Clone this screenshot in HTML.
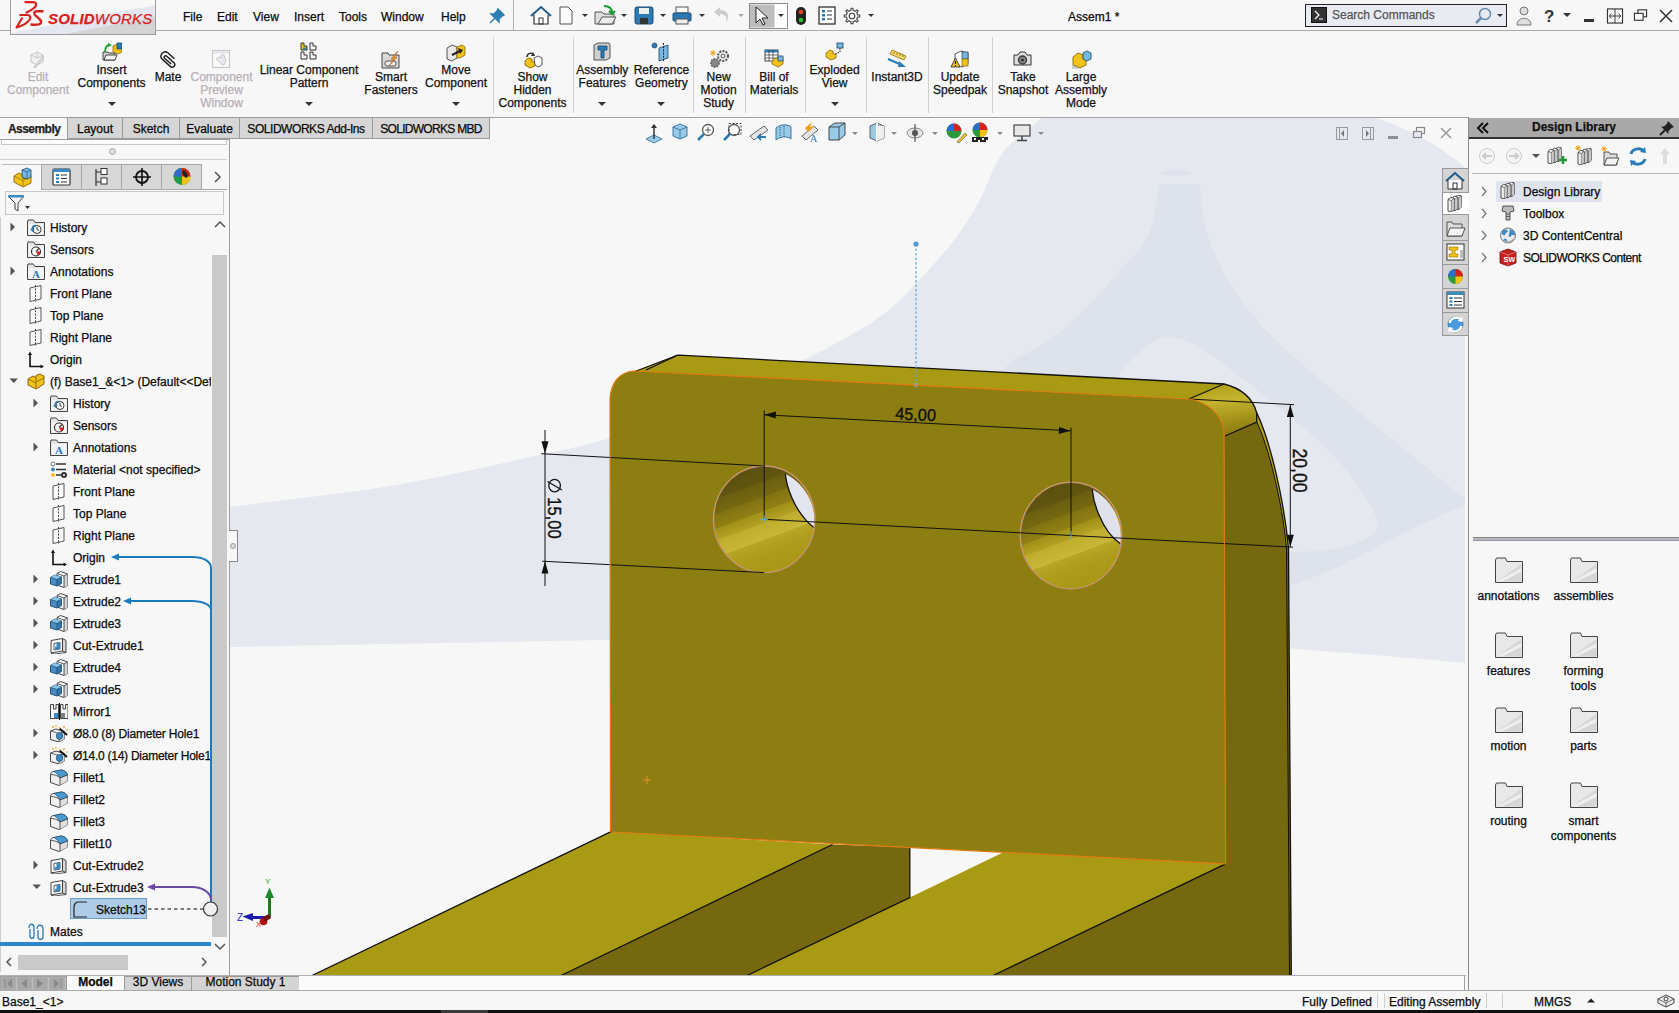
<!DOCTYPE html>
<html><head><meta charset="utf-8">
<style>
*{margin:0;padding:0;box-sizing:border-box}
html,body{width:1679px;height:1013px;overflow:hidden;background:#f7f7f7;font-family:"Liberation Sans",sans-serif;font-size:12px;color:#0a0a0a}
.a{position:absolute}
.t{position:absolute;white-space:nowrap;line-height:13px;-webkit-text-stroke:0.25px currentColor}
</style></head><body>

<!-- ============ GRAPHICS AREA ============ -->
<svg class="a" style="left:0;top:0" width="1679" height="1013" viewBox="0 0 1679 1013">
<defs>
<clipPath id="vp"><rect x="230" y="118" width="1235" height="858"/></clipPath>
<linearGradient id="holeg" x1="0.1" y1="0" x2="0.45" y2="1">
<stop offset="0" stop-color="#574c0e"/><stop offset="0.25" stop-color="#615510"/><stop offset="0.25" stop-color="#6a5d10"/><stop offset="0.38" stop-color="#776911"/><stop offset="0.38" stop-color="#827312"/><stop offset="0.5" stop-color="#908014"/><stop offset="0.5" stop-color="#a09018"/><stop offset="0.6" stop-color="#b3a224"/><stop offset="0.6" stop-color="#bfad2e"/><stop offset="0.74" stop-color="#c9b738"/><stop offset="0.74" stop-color="#b8a726"/><stop offset="0.85" stop-color="#ad9d1a"/><stop offset="1" stop-color="#a89816"/>
</linearGradient>
<linearGradient id="filg" x1="0" y1="0" x2="0.2" y2="1">
<stop offset="0" stop-color="#a99a14"/><stop offset="0.4" stop-color="#c6b42e"/><stop offset="1" stop-color="#8e7f10"/>
</linearGradient>
</defs>
<rect x="229" y="117" width="1237" height="859" fill="#f7f7f7"/>
<g clip-path="url(#vp)">
<!-- background tent shape -->
<path d="M229 507 C 256.8 503.3 344.3 493.7 396.0 485.0 C 447.7 476.3 503.3 462.8 539.0 455.0 C 574.7 447.2 583.2 446.3 610.0 438.0 C 636.8 429.7 667.7 418.0 700.0 405.0 C 732.3 392.0 774.0 374.2 803.6 359.8 C 833.2 345.4 857.9 332.1 877.6 318.3 C 897.3 304.5 908.7 290.7 922.0 276.9 C 935.3 263.1 947.7 248.7 957.6 235.4 C 967.5 222.1 975.4 207.8 981.3 197.0 C 987.2 186.2 988.5 178.7 993.0 170.3 C 997.5 161.9 999.7 155.5 1008.0 146.6 C 1016.3 137.7 1037.2 121.9 1043.0 117.0 L 1372 117 C 1410 128 1445 150 1466 168 L 1466 663 C 1436.7 660.6 1351.0 652.8 1290.0 648.6 C 1229.0 644.4 1165.0 639.9 1100.0 638.0 C 1035.0 636.1 981.7 636.7 900.0 637.0 C 818.3 637.3 721.8 638.3 610.0 640.0 C 498.2 641.7 292.5 645.8 229.0 647.0 Z" fill="#e5e8ef"/>
<path d="M960 420 L1009 363.5 C 1017.8 357.9 1044.2 344.6 1062.0 330.0 C 1079.8 315.4 1101.0 292.2 1115.5 276.0 C 1130.0 259.8 1141.8 248.2 1149.0 233.0 C 1156.2 217.8 1157.3 192.6 1159.0 184.5 L1200 184.5 C 1201.2 192.6 1201.7 216.1 1207.0 233.0 C 1212.3 249.9 1221.1 269.1 1231.6 286.0 C 1242.1 302.9 1255.5 319.2 1270.0 334.5 C 1284.5 349.8 1300.9 362.7 1318.7 378.0 C 1336.5 393.3 1352.2 406.1 1376.7 426.4 C 1401.2 446.7 1451.1 487.7 1466.0 500.0 L1466 504 C 1455.0 509.2 1421.0 524.7 1400.0 535.0 C 1379.0 545.3 1358.4 557.5 1340.0 566.0 C 1321.6 574.5 1298.0 582.7 1289.6 586.0 L1000 590 Z" fill="#dee2eb"/>
<path d="M1110 385 C 1115.0 379.5 1129.4 360.0 1140.0 352.0 C 1150.6 344.0 1159.8 335.1 1173.5 337.0 C 1187.2 338.9 1197.8 346.2 1222.0 363.5 C 1246.2 380.8 1295.7 419.9 1318.7 441.0 C 1341.7 462.1 1350.3 475.5 1360.0 490.0 C 1369.7 504.5 1380.0 518.3 1376.7 528.0 C 1373.4 537.7 1354.5 544.0 1340.0 548.0 C 1325.5 552.0 1298.0 551.3 1289.6 552.0 L1100 560 Z" fill="#e5e8ef"/>
<ellipse cx="1176" cy="173" rx="16" ry="2.5" fill="#dee2eb"/>
<!-- dark side faces -->
<path d="M1224 384 C 1240 388 1252 396 1256.7 412.7 C 1270 440 1284 500 1288.5 548 L 1291.5 976 L 992 976 L 1225.6 863.8 L 1224 431 Z" fill="#76680e"/>
<!-- light outer fillet strip -->
<path d="M1256.7 412.7 C 1270 440 1284 500 1288.5 548 L 1286.5 548 C 1282 500 1268 445 1256.7 422 Z" fill="#b0a01c"/>
<!-- top face -->
<path d="M634 371.5 L 674 356.5 C 675.5 355.6 677 355.2 679 355.2 L 1224 384 L 1189 399 Z" fill="#a99a14"/>
<!-- top-right fillet -->
<path d="M1189 399 L 1224 384 C 1240 388 1252 396 1256.7 412.7 L 1256.7 422 L 1225 436 C 1222 415 1208 402 1189 399 Z" fill="url(#filg)"/>
<!-- front face -->
<path d="M610.5 832 L 610 399 C 611 382 620 372 634 371 L 1189 399 C 1208 402 1222 415 1224 431 L 1225.6 863.8 Z" fill="#8c7e10"/>
<!-- legs -->
<path d="M611.6 831.4 L 832.5 844.5 L 560 976 L 311 976 Z" fill="#a99a14"/>
<path d="M832.5 844.5 L 909.8 847.3 L 909.8 897.5 L 746 976 L 560 976 Z" fill="#76680e"/>
<path d="M909.8 897.5 L 1004 852 L 1225.6 863.8 L 992 976 L 746 976 Z" fill="#a99a14"/>
<!-- holes -->
<ellipse cx="764.2" cy="519.3" rx="50.7" ry="53.3" fill="url(#holeg)"/>
<path d="M785.4 473.7 A50.7 53.3 0 0 1 814.2 527.7 C 806 522 797 510 792 498 C 788 489 786 482 785.4 473.7 Z" fill="#e2e5ee" stroke="none"/>
<path d="M785.4 473.7 C 786 482 788 489 792 498 C 797 510 806 522 814.2 527.7" fill="none" stroke="#111" stroke-width="1.3"/>
<ellipse cx="1071" cy="535.5" rx="50.7" ry="53.2" fill="url(#holeg)"/>
<path d="M1092.2 489.3 A50.7 53.2 0 0 1 1120.4 543.8 C 1112 538 1104 527 1099 515 C 1095 506 1093 498 1092.2 489.3 Z" fill="#dfe2eb" stroke="none"/>
<path d="M1092.2 489.3 C 1093 498 1095 506 1099 515 C 1104 527 1112 538 1120.4 543.8" fill="none" stroke="#111" stroke-width="1.3"/>
<ellipse cx="764.2" cy="519.3" rx="50.7" ry="53.3" fill="none" stroke="#d9905a" stroke-width="1.4"/>
<ellipse cx="764.2" cy="519.3" rx="50.7" ry="53.3" fill="none" stroke="#6aaee0" stroke-width="0.7" stroke-dasharray="3 5"/>
<ellipse cx="1071" cy="535.5" rx="50.7" ry="53.2" fill="none" stroke="#d9905a" stroke-width="1.4"/>
<ellipse cx="1071" cy="535.5" rx="50.7" ry="53.2" fill="none" stroke="#6aaee0" stroke-width="0.7" stroke-dasharray="3 5"/>

<!-- edges -->
<g fill="none" stroke="#111" stroke-width="1.3">
<path d="M635 371.5 L 674 356.5 C 675.5 355.6 677 355.2 679 355.2 L 1224 384 C 1240 388 1252 396 1256.7 412.7 C 1270 440 1284 500 1288.5 548 L 1291.3 976"/>
<path d="M1256.7 422 C 1268 445 1282 500 1286.5 548 L 1289.5 976" stroke-width="1"/>
<path d="M646 370 L 676 356"/>
<path d="M1189 399 L 1224 384"/>
<path d="M1225 436 L 1256.7 422 L 1256.7 412.7"/>
<path d="M611.6 831.4 L 311 976"/>
<path d="M832.5 844.5 L 560 976"/>
<path d="M909.8 847.3 L 909.8 897.5 L 746 976"/>
<path d="M1225.6 863.8 L 992 976"/>
</g>

<!-- annotations -->
<g stroke="#111" stroke-width="1" fill="none">
<path d="M764.2 410.5 V519.3"/>
<path d="M1071 427.5 V535.5"/>
<path d="M764.2 414.8 L1071 430.8"/>
<path d="M545 430 V586"/>
<path d="M541.3 453.7 L764.2 466"/>
<path d="M542.2 561.2 L764.2 572.6"/>
<path d="M764.2 519.3 L1293 547.2"/>
<path d="M1189.2 399 L1294 404.7"/>
<path d="M1290.3 404.5 V547"/>
</g>
<g fill="#111">
<path d="M764.5 414.8 L776 411.6 L775.6 418.6 Z"/>
<path d="M1070.7 430.8 L1059 427 L1058.8 434 Z"/>
<path d="M545 453.7 L541.5 441.3 L548.5 441.3 Z"/>
<path d="M545 561.2 L541.5 573.6 L548.5 573.6 Z"/>
<path d="M1290.3 404.7 L1286.8 417 L1293.8 417 Z"/>
<path d="M1290.3 547 L1286.8 534.7 L1293.8 534.7 Z"/>
</g>
<text x="0" y="0" font-family="Liberation Sans" font-size="16.3" fill="#111" stroke="#111" stroke-width="0.35" transform="translate(895 419.2) rotate(3) scale(1 1.05)">45,00</text>
<text x="0" y="0" font-family="Liberation Sans" font-size="16.6" fill="#111" stroke="#111" stroke-width="0.35" transform="translate(547.8 497.3) rotate(90) scale(1 1.1)">15,00</text>
<ellipse cx="554.6" cy="485.6" rx="5.8" ry="6.3" fill="none" stroke="#111" stroke-width="1.3"/>
<path d="M547.5 481.5 L 562 490" stroke="#111" stroke-width="1.2"/>
<text x="0" y="0" font-family="Liberation Sans" font-size="17.6" fill="#111" stroke="#111" stroke-width="0.35" transform="translate(1292.7 448.5) rotate(90) scale(1 1.14)">20,00</text>
<path d="M764.2 515.5 V523 M760.5 519.3 H768" stroke="#5aaee8" stroke-width="1"/>
<path d="M1071 531 V540" stroke="#5aaee8" stroke-width="1"/>
<path d="M916 244 V385" stroke="#5aa8e0" stroke-width="1.2" stroke-dasharray="2.5 2"/>
<circle cx="916" cy="244" r="2.6" fill="#4a9ee0"/>
<circle cx="916" cy="385" r="2" fill="#7ab0d8"/>
<path d="M647 776 V784 M643 780 H651" stroke="#f08a2a" stroke-width="1"/>
<!-- triad -->
<path d="M269.5 918 V893" stroke="#1f7a1f" stroke-width="3"/>
<path d="M265 898 L269.5 887.5 L274 898 Z" fill="#1f8a2a"/>
<path d="M269 917.5 H248" stroke="#1a1ab0" stroke-width="3"/>
<path d="M253 913 L242.5 916.5 L253 921 Z" fill="#1a1ab0"/>
<circle cx="263.5" cy="921.5" r="3.8" fill="#b01010"/>
<path d="M263 917 L269 914 L271 918 L265 922 Z" fill="#701010"/>
<text x="237" y="921" font-family="Liberation Sans" font-size="10" fill="#2222dd">Z</text>
<text x="265" y="884" font-family="Liberation Sans" font-size="8" fill="#22aa22">Y</text>
<text x="256" y="927" font-family="Liberation Sans" font-size="8" fill="#ee2222">X</text>
<g fill="none" stroke="#e07a10" stroke-width="1.2">
<path d="M610.5 832 L 610 399 C 611 382 620 372 634 371 L 1189 399 C 1208 402 1222 415 1224 431 L 1225.6 863.8 L 610.5 832"/>
</g>
</g>
</svg>


<!-- ============ TOP BAR ============ -->
<div class="a" style="left:0;top:30px;width:1679px;height:1px;background:#a8a8a8"></div>
<div class="a" style="left:513px;top:0;width:1px;height:30px;background:#b0b0b0"></div>
<!-- logo -->
<svg class="a" style="left:10px;top:-1px" width="146" height="36" viewBox="10 -1 146 36">
<rect x="10.5" y="-0.5" width="145" height="35" fill="#f7f7f7"/>
<path d="M11 33 C 60 24 110 12 155 5.5 L 155 34.5 L 11 34.5 Z" fill="#e4e7ef"/>
<path d="M63 34.5 L155 16.5 L155 34.5 Z" fill="#d4d4d4"/>
<rect x="10.5" y="-0.5" width="145" height="35" fill="none" stroke="#9c9c9c"/>
<path d="M25.5 2.2 L 33 2.2 C 37 2.5 37 5.5 34 8 C 31 10.5 28.5 11.5 26.5 12.5" fill="none" stroke="#d8201e" stroke-width="2.2" stroke-linecap="round"/>
<path d="M19.5 15 L 27.5 15 C 31.5 15.5 31 19 28 21.5 C 25 24.5 20 26.5 16.5 27.5 L 22.5 17.5" fill="none" stroke="#d8201e" stroke-width="2.1" stroke-linejoin="round"/>
<path d="M43.5 11.2 L 37 11.2 C 33.5 11.5 33.5 14 36 16 C 39 18.5 42.5 21 40.5 23.5 C 39 25 34 24.8 30.5 24.5" fill="none" stroke="#d8201e" stroke-width="2.4"/>
</svg>
<div class="t" style="left:48px;top:11px;font-size:15px;line-height:16px;color:#d8201e;font-style:italic;letter-spacing:0.2px"><b style="font-weight:bold">SOLID</b>WORKS</div>
<!-- menu -->
<div class="t" style="left:183px;top:11px">File</div>
<div class="t" style="left:217px;top:11px">Edit</div>
<div class="t" style="left:253px;top:11px">View</div>
<div class="t" style="left:294px;top:11px">Insert</div>
<div class="t" style="left:339px;top:11px">Tools</div>
<div class="t" style="left:381px;top:11px">Window</div>
<div class="t" style="left:441px;top:11px">Help</div>
<svg class="a" style="left:489px;top:8px" width="16" height="16" viewBox="0 0 16 16"><path d="M9 1 L15 7 L13 8 L10 11 L10 14 L2 6 L5 6 L8 3 Z M6 10 L1 15" fill="#2e7fb4" stroke="#2e7fb4" stroke-width="1.5"/></svg>
<!-- quick access -->
<svg class="a" style="left:528px;top:0px" width="360" height="30" viewBox="528 0 360 30">
<g fill="none" stroke="#1d5b86" stroke-width="1.8"><path d="M531 16 L541 7 L551 16"/></g>
<path d="M534 15 L534 24 L548 24 L548 15" fill="#fff" stroke="#333" stroke-width="1.2"/><rect x="539" y="18" width="4" height="6" fill="none" stroke="#333"/>
<path d="M560 7 L568 7 L572 11 L572 24 L560 24 Z" fill="#fafafa" stroke="#555" stroke-width="1"/>
<path d="M582 14 L588 14 L585 17 Z" fill="#333"/>
<path d="M595 12 L602 12 L604 14 L614 14 L614 24 L595 24 Z" fill="#ddd" stroke="#555"/><path d="M598 24 L602 17 L616 17 L612 24 Z" fill="#eee" stroke="#555"/><path d="M604 6 C 610 6 612 9 612 13 M609 11 L612 14 L615 11" fill="none" stroke="#1a9a30" stroke-width="2"/>
<path d="M621 14 L627 14 L624 17 Z" fill="#333"/>
<rect x="635" y="7" width="18" height="17" rx="2" fill="#2b79b0" stroke="#1d4f75"/><rect x="639" y="8" width="10" height="6" fill="#eee"/><rect x="640" y="18" width="8" height="6" fill="#333"/>
<path d="M660 14 L666 14 L663 17 Z" fill="#333"/>
<rect x="676" y="7" width="12" height="6" fill="#fafafa" stroke="#555"/><rect x="673" y="13" width="18" height="8" rx="1" fill="#2b79b0" stroke="#1d4f75"/><rect x="676" y="19" width="12" height="5" fill="#eee" stroke="#555"/>
<path d="M699 14 L705 14 L702 17 Z" fill="#333"/>
<path d="M714 12 L720 7 L720 10 C 728 10 730 16 726 23 C 728 16 724 14 720 14 L720 17 Z" fill="#ccc"/>
<path d="M738 14 L744 14 L741 17 Z" fill="#aaa"/>
<rect x="749.5" y="3.5" width="38" height="25" fill="#fff" stroke="#8a8a8a"/><rect x="750" y="4.5" width="24.5" height="23" fill="#bdbdbd"/>
<path d="M756 7 L756 23 L760 19 L763 25 L765 24 L762 18 L768 18 Z" fill="#fff" stroke="#222" stroke-width="1"/>
<path d="M778 14 L784 14 L781 17 Z" fill="#333"/>
<rect x="796" y="7" width="10" height="18" rx="5" fill="#222"/><circle cx="801" cy="12" r="2.3" fill="#d42"/><circle cx="801" cy="20" r="2.3" fill="#3b3"/>
<rect x="819" y="7" width="16" height="17" fill="#fff" stroke="#333" stroke-width="1.3"/><g fill="#2b79b0"><rect x="822" y="10" width="3" height="2.5"/><rect x="822" y="14" width="3" height="2.5"/><rect x="822" y="18" width="3" height="2.5"/></g><g stroke="#333"><path d="M827 11 H832 M827 15 H832 M827 19 H832"/></g>
<path d="M857.49 14.89 L859.74 15.07 L859.74 16.93 L857.49 17.11 L857.18 18.13 L856.67 19.09 L858.14 20.82 L856.82 22.14 L855.09 20.67 L854.16 21.17 L853.11 21.49 L852.93 23.74 L851.07 23.74 L850.89 21.49 L849.87 21.18 L848.91 20.67 L847.18 22.14 L845.86 20.82 L847.33 19.09 L846.83 18.16 L846.51 17.11 L844.26 16.93 L844.26 15.07 L846.51 14.89 L846.82 13.87 L847.33 12.91 L845.86 11.18 L847.18 9.86 L848.91 11.33 L849.84 10.83 L850.89 10.51 L851.07 8.26 L852.93 8.26 L853.11 10.51 L854.13 10.82 L855.09 11.33 L856.82 9.86 L858.14 11.18 L856.67 12.91 L857.17 13.84 Z" fill="#f7f7f7" stroke="#444" stroke-width="1.1" stroke-linejoin="round"/><circle cx="852" cy="16" r="2.8" fill="none" stroke="#444" stroke-width="1.1"/>
<path d="M868 14 L874 14 L871 17 Z" fill="#333"/>
</svg>
<div class="t" style="left:1068px;top:11px">Assem1 *</div>
<!-- search -->
<div class="a" style="left:1305px;top:4px;width:202px;height:23px;border:1px solid #222;background:#e8ebf2"></div>
<div class="a" style="left:1311px;top:7px;width:16px;height:16px;background:#333;border:1px solid #111"></div>
<svg class="a" style="left:1311px;top:7px" width="16" height="16"><path d="M4 4 L8 8 L4 12 M8 12 H12" stroke="#fff" stroke-width="1.2" fill="none"/></svg>
<div class="t" style="left:1332px;top:9px;color:#555">Search Commands</div>
<svg class="a" style="left:1472px;top:6px" width="34" height="20" viewBox="0 0 34 20"><circle cx="13" cy="8" r="5.5" fill="none" stroke="#6a8bb0" stroke-width="1.5"/><path d="M9 12 L4 17" stroke="#6a8bb0" stroke-width="2.5"/><path d="M25 8 L31 8 L28 11 Z" fill="#333"/></svg>
<svg class="a" style="left:1514px;top:5px" width="20" height="22" viewBox="0 0 20 22"><circle cx="10" cy="6" r="4" fill="#ddd" stroke="#777"/><path d="M3 20 C 3 11 17 11 17 20 Z" fill="#ddd" stroke="#777"/></svg>
<div class="t" style="left:1544px;top:8px;font-size:17px;line-height:18px;font-weight:bold;color:#333;-webkit-text-stroke:0">?</div>
<svg class="a" style="left:1562px;top:12px" width="10" height="6"><path d="M1 1 L9 1 L5 5 Z" fill="#333"/></svg>
<div class="a" style="left:1584px;top:19px;width:10px;height:3px;background:#333"></div>
<svg class="a" style="left:1606px;top:8px" width="18" height="16" viewBox="0 0 18 17"><rect x="1" y="1" width="16" height="15" fill="none" stroke="#333" stroke-width="1.2"/><path d="M9 1 V16 M3 8.5 H15 M5 6 L3 8.5 L5 11 M13 6 L15 8.5 L13 11" fill="none" stroke="#333"/></svg>
<svg class="a" style="left:1633px;top:9px" width="15" height="13" viewBox="0 0 16 15"><rect x="5" y="1" width="10" height="8" fill="none" stroke="#333" stroke-width="1.3"/><rect x="1" y="5" width="10" height="8" fill="#f7f7f7" stroke="#333" stroke-width="1.3"/></svg>
<svg class="a" style="left:1658px;top:8px" width="16" height="16" viewBox="0 0 16 16"><path d="M2 2 L14 14 M14 2 L2 14" stroke="#333" stroke-width="1.5"/></svg>

<!-- ============ RIBBON ============ -->
<div class="t" style="left:-22px;width:120px;text-align:center;top:71px;color:#b8b0b8">Edit</div>
<div class="t" style="left:-22px;width:120px;text-align:center;top:84px;color:#b8b0b8">Component</div>
<div class="t" style="left:51.5px;width:120px;text-align:center;top:64px;color:#111">Insert</div>
<div class="t" style="left:51.5px;width:120px;text-align:center;top:77px;color:#111">Components</div>
<svg class="a" style="left:107.5px;top:102px" width="8" height="5"><path d="M0 0 L8 0 L4 4 Z" fill="#333"/></svg>
<div class="t" style="left:108px;width:120px;text-align:center;top:71px;color:#111">Mate</div>
<div class="t" style="left:161.5px;width:120px;text-align:center;top:71px;color:#b8b0b8">Component</div>
<div class="t" style="left:161.5px;width:120px;text-align:center;top:84px;color:#b8b0b8">Preview</div>
<div class="t" style="left:161.5px;width:120px;text-align:center;top:97px;color:#b8b0b8">Window</div>
<div class="t" style="left:249px;width:120px;text-align:center;top:64px;color:#111">Linear Component</div>
<div class="t" style="left:249px;width:120px;text-align:center;top:77px;color:#111">Pattern</div>
<svg class="a" style="left:305px;top:102px" width="8" height="5"><path d="M0 0 L8 0 L4 4 Z" fill="#333"/></svg>
<div class="t" style="left:331px;width:120px;text-align:center;top:71px;color:#111">Smart</div>
<div class="t" style="left:331px;width:120px;text-align:center;top:84px;color:#111">Fasteners</div>
<div class="t" style="left:396px;width:120px;text-align:center;top:64px;color:#111">Move</div>
<div class="t" style="left:396px;width:120px;text-align:center;top:77px;color:#111">Component</div>
<svg class="a" style="left:452px;top:102px" width="8" height="5"><path d="M0 0 L8 0 L4 4 Z" fill="#333"/></svg>
<div class="t" style="left:472.5px;width:120px;text-align:center;top:71px;color:#111">Show</div>
<div class="t" style="left:472.5px;width:120px;text-align:center;top:84px;color:#111">Hidden</div>
<div class="t" style="left:472.5px;width:120px;text-align:center;top:97px;color:#111">Components</div>
<div class="t" style="left:542.3px;width:120px;text-align:center;top:64px;color:#111">Assembly</div>
<div class="t" style="left:542.3px;width:120px;text-align:center;top:77px;color:#111">Features</div>
<svg class="a" style="left:598.3px;top:102px" width="8" height="5"><path d="M0 0 L8 0 L4 4 Z" fill="#333"/></svg>
<div class="t" style="left:601.4px;width:120px;text-align:center;top:64px;color:#111">Reference</div>
<div class="t" style="left:601.4px;width:120px;text-align:center;top:77px;color:#111">Geometry</div>
<svg class="a" style="left:657.4px;top:102px" width="8" height="5"><path d="M0 0 L8 0 L4 4 Z" fill="#333"/></svg>
<div class="t" style="left:658.6px;width:120px;text-align:center;top:71px;color:#111">New</div>
<div class="t" style="left:658.6px;width:120px;text-align:center;top:84px;color:#111">Motion</div>
<div class="t" style="left:658.6px;width:120px;text-align:center;top:97px;color:#111">Study</div>
<div class="t" style="left:714px;width:120px;text-align:center;top:71px;color:#111">Bill of</div>
<div class="t" style="left:714px;width:120px;text-align:center;top:84px;color:#111">Materials</div>
<div class="t" style="left:774.6px;width:120px;text-align:center;top:64px;color:#111">Exploded</div>
<div class="t" style="left:774.6px;width:120px;text-align:center;top:77px;color:#111">View</div>
<svg class="a" style="left:830.6px;top:102px" width="8" height="5"><path d="M0 0 L8 0 L4 4 Z" fill="#333"/></svg>
<div class="t" style="left:837px;width:120px;text-align:center;top:71px;color:#111">Instant3D</div>
<div class="t" style="left:900px;width:120px;text-align:center;top:71px;color:#111">Update</div>
<div class="t" style="left:900px;width:120px;text-align:center;top:84px;color:#111">Speedpak</div>
<div class="t" style="left:963px;width:120px;text-align:center;top:71px;color:#111">Take</div>
<div class="t" style="left:963px;width:120px;text-align:center;top:84px;color:#111">Snapshot</div>
<div class="t" style="left:1021px;width:120px;text-align:center;top:71px;color:#111">Large</div>
<div class="t" style="left:1021px;width:120px;text-align:center;top:84px;color:#111">Assembly</div>
<div class="t" style="left:1021px;width:120px;text-align:center;top:97px;color:#111">Mode</div>
<div class="a" style="left:493px;top:37px;width:1px;height:76px;background:#d0d0d0"></div>
<div class="a" style="left:572.7px;top:37px;width:1px;height:76px;background:#d0d0d0"></div>
<div class="a" style="left:693px;top:37px;width:1px;height:76px;background:#d0d0d0"></div>
<div class="a" style="left:744.5px;top:37px;width:1px;height:76px;background:#d0d0d0"></div>
<div class="a" style="left:804.6px;top:37px;width:1px;height:76px;background:#d0d0d0"></div>
<div class="a" style="left:865.6px;top:37px;width:1px;height:76px;background:#d0d0d0"></div>
<div class="a" style="left:928.4px;top:37px;width:1px;height:76px;background:#d0d0d0"></div>
<div class="a" style="left:992.2px;top:37px;width:1px;height:76px;background:#d0d0d0"></div>
<!-- ribbon icons -->
<svg class="a" style="left:28px;top:49px" width="20" height="20" viewBox="0 0 20 20"><path d="M3 6 L9 3 L15 6 L15 13 L9 16 L3 13 Z" fill="#f0f0f0" stroke="#c8c8c8"/><path d="M9 3 L9 9 M3 6 L9 9 L15 6" fill="none" stroke="#c8c8c8"/><path d="M16 8 L8 18 L6 19 L7 17 L15 7 Z" fill="#e8e8e8" stroke="#c0c0c0"/></svg>
<svg class="a" style="left:102px;top:42px" width="20" height="20" viewBox="0 0 20 20"><path d="M1 10 L6 10 L7 11 L13 11 L13 18 L1 18 Z" fill="#d0d0d0" stroke="#333" stroke-width="0.9"/><path d="M2 18 L4 13 L15 13 L13 18 Z" fill="#f4f4f4" stroke="#333" stroke-width="0.9"/><path d="M3 10 C 3 5 5 3 8 3" fill="none" stroke="#1e9a2e" stroke-width="1.8"/><path d="M6 1 L10 3 L6 5 Z" fill="#1e9a2e"/><path d="M11 4 L16 2 L20 4 L20 10 L16 12 L11 10 Z" fill="#f2c21c" stroke="#8a6a00" stroke-width="0.8"/><rect x="15" y="1" width="5" height="6" fill="#2b7bb5" stroke="#14466b" stroke-width="0.7"/></svg>
<svg class="a" style="left:159px;top:49px" width="20" height="20" viewBox="0 0 20 20"><path d="M15.5 9.8 L8.8 3.8 A4.3 4.3 0 0 0 2.8 9.8 L11.5 17.6 A2.6 2.6 0 0 0 15.2 14 L7.8 7.2 A1.5 1.5 0 0 0 5.6 9.3 L12.2 15" fill="none" stroke="#1a1a1a" stroke-width="1.4"/></svg>
<svg class="a" style="left:211px;top:49px" width="20" height="20" viewBox="0 0 20 20"><rect x="1.5" y="1.5" width="17" height="17" fill="#fafafa" stroke="#c8c8c8" stroke-width="1.2"/><rect x="2" y="2.5" width="16" height="2" fill="#dfe2ea"/><path d="M5 10 L8 8 L10 9 L10 6 L13 6 L14 9 L15 12 L13 16 L10 15 Z" fill="#e6e8ee" stroke="#c8c8c8" stroke-width="1"/></svg>
<svg class="a" style="left:300px;top:42px" width="20" height="20" viewBox="0 0 20 20"><g stroke="#333" stroke-width="1" fill="#f4f4f4"><path d="M1 1 L4 1 L4 4 L7 4 L7 8 L1 8 Z" fill="#f2c21c"/><path d="M10 1 L13 1 L13 4 L16 4 L16 8 L10 8 Z"/><path d="M1 10 L4 10 L4 13 L7 13 L7 17 L1 17 Z"/><path d="M10 10 L13 10 L13 13 L16 13 L16 17 L10 17 Z"/></g><rect x="3" y="5.5" width="4" height="2" fill="#2b7bb5"/></svg>
<svg class="a" style="left:381px;top:50px" width="20" height="20" viewBox="0 0 20 20"><path d="M1 3 L7 3 L8 5 L18 5 L18 18 L1 18 Z" fill="#d8d8d8" stroke="#444"/><rect x="4" y="11" width="11" height="5" rx="2" fill="#eee" stroke="#444" stroke-width="0.9"/><path d="M17 1 L10 9 L13 9 L8 16 L16 7 L13 7 Z" fill="#f2a020" stroke="#b05010" stroke-width="0.6"/></svg>
<svg class="a" style="left:446px;top:43px" width="20" height="20" viewBox="0 0 20 20"><path d="M1 5 L6 2 L11 4 L11 15 L6 18 L1 16 Z" fill="#e8e8e8" stroke="#444" stroke-width="0.9"/><path d="M11 4 L16 2 L19 4 L19 12 L14 15 L11 15 Z" fill="#f2c21c" stroke="#8a6a00" stroke-width="0.8"/><path d="M6 12 L14 8" stroke="#222" stroke-width="2"/><path d="M12 5 L17 7 L14 11 Z" fill="#222"/></svg>
<svg class="a" style="left:523px;top:49px" width="20" height="20" viewBox="0 0 20 20"><path d="M4 8 C 4 4 9 3 11 6" fill="none" stroke="#333" stroke-width="1.5"/><path d="M10 3 L12 7 L8 7 Z" fill="#333"/><path d="M2 12 L5 9 L9 10 L9 13 L12 13 L12 17 L7 19 L2 16 Z" fill="#f2c21c" stroke="#8a6a00" stroke-width="0.9"/><path d="M11 9 L15 7 L19 9 L19 16 L15 18 L12 16 Z" fill="#fff" stroke="#444" stroke-width="0.9"/></svg>
<svg class="a" style="left:593px;top:42px" width="20" height="20" viewBox="0 0 20 20"><path d="M1 3 L5 1 L16 1 L17 3 L17 16 L13 18 L1 18 Z" fill="#cfcfcf" stroke="#444" stroke-width="0.9"/><path d="M5 4 L14 4 L14 8 L11 8 L11 16 L8 16 L8 8 L5 8 Z" fill="#2b7bb5" stroke="#14466b" stroke-width="0.8"/></svg>
<svg class="a" style="left:651px;top:42px" width="20" height="20" viewBox="0 0 20 20"><circle cx="3.5" cy="3.5" r="2.5" fill="#2b7bb5" stroke="#14466b" stroke-width="0.7"/><path d="M8 6 L17 3 L17 16 L8 19 Z" fill="#79b6e0" stroke="#14466b" stroke-width="0.8"/><path d="M12.5 1 L12.5 20" stroke="#222" stroke-dasharray="2 1.2"/></svg>
<svg class="a" style="left:709px;top:49px" width="20" height="20" viewBox="0 0 20 20"><circle cx="14" cy="7" r="5" fill="#eee" stroke="#555" stroke-width="2" stroke-dasharray="2 1.2"/><circle cx="14" cy="7" r="2" fill="none" stroke="#555"/><circle cx="6" cy="14" r="4" fill="#888" stroke="#666" stroke-width="1.8" stroke-dasharray="1.8 1"/><path d="M4 1 L4 7 M1 4 L7 4 M2 2 L6 6 M6 2 L2 6" stroke="#f0a020" stroke-width="1"/></svg>
<svg class="a" style="left:764px;top:49px" width="20" height="20" viewBox="0 0 20 20"><rect x="1" y="1" width="13" height="11" fill="#fff" stroke="#333" stroke-width="0.9"/><rect x="1" y="1" width="13" height="2.5" fill="#2b7bb5"/><path d="M1 6 H14 M1 9 H14 M5 1 V12 M9 1 V12" stroke="#333" stroke-width="0.7"/><path d="M8 12 L12 9 L16 10 L16 7 L19 8 L19 15 L14 18 L8 15 Z" fill="#f2c21c" stroke="#8a6a00" stroke-width="0.8"/><rect x="14" y="7" width="5" height="5" fill="#79b6e0" stroke="#14466b" stroke-width="0.7"/></svg>
<svg class="a" style="left:825px;top:42px" width="20" height="20" viewBox="0 0 20 20"><path d="M1 11 L5 8 L8 9 L8 12 L11 12 L11 16 L6 18 L1 15 Z" fill="#f2c21c" stroke="#8a6a00" stroke-width="0.8"/><rect x="12" y="1" width="6" height="5" fill="#79b6e0" stroke="#14466b" stroke-width="0.8"/><path d="M15 6 L15 10 L10 12" fill="none" stroke="#222" stroke-dasharray="1.5 1"/></svg>
<svg class="a" style="left:887px;top:49px" width="20" height="20" viewBox="0 0 20 20"><path d="M5 1 L19 7 L17 11 L3 5 Z" fill="#f5d86a" stroke="#8a6a00" stroke-width="0.8"/><path d="M7 3 L7 5 M10 4 L10 6 M13 5 L13 7 M16 6 L16 8" stroke="#8a6a00" stroke-width="0.8"/><path d="M1 10 L15 16" stroke="#2b7bb5" stroke-width="2"/><path d="M12 12 L19 18 L11 18 Z" fill="#2b7bb5"/></svg>
<svg class="a" style="left:950px;top:49px" width="20" height="20" viewBox="0 0 20 20"><path d="M5 5 L11 2 L18 4 L18 15 L12 18 L5 16 Z" fill="#fff" stroke="#444" stroke-width="0.9"/><rect x="12" y="3" width="6" height="7" fill="#79b6e0" stroke="#14466b" stroke-width="0.7"/><rect x="12" y="10" width="6" height="7" fill="#f2c21c" stroke="#8a6a00" stroke-width="0.7"/><path d="M1 18 L5.5 9 L10 18 Z" fill="#f2c21c" stroke="#333" stroke-width="0.9"/><path d="M5.5 12 V15 M5.5 16 V17" stroke="#111" stroke-width="1.1"/></svg>
<svg class="a" style="left:1013px;top:50px" width="20" height="20" viewBox="0 0 20 20"><path d="M1 5 L5 5 L7 2 L12 2 L14 5 L18 5 L18 15 L1 15 Z" fill="#ddd" stroke="#333" stroke-width="1"/><circle cx="9.5" cy="10" r="4" fill="#888" stroke="#333" stroke-width="1.3"/><circle cx="9.5" cy="10" r="1.5" fill="#333"/></svg>
<svg class="a" style="left:1072px;top:50px" width="20" height="20" viewBox="0 0 20 20"><path d="M1 7 L6 3 L11 5 L11 9 L14 9 L14 15 L8 18 L1 15 Z" fill="#f2c21c" stroke="#8a6a00" stroke-width="0.9"/><path d="M11 3 L15 1 L19 3 L19 9 L15 11 L11 9 Z" fill="#79b6e0" stroke="#14466b" stroke-width="0.8"/><path d="M0 16 H5 M0 18 H6" stroke="#888" stroke-width="0.7"/></svg>

<!-- ============ COMMAND TABS ============ -->
<div class="a" style="left:0;top:117px;width:1468px;height:1px;background:#a0a0a0"></div>
<div class="a" style="left:1468px;top:117px;width:211px;height:1px;background:#777"></div>
<div class="t" style="left:8px;top:123px;font-weight:bold;color:#222;letter-spacing:-0.55px">Assembly</div>
<div class="a" style="left:67px;top:117px;width:56px;height:22px;background:#d6d6d6;border:1px solid #9a9a9a"></div>
<div class="t" style="left:67px;width:56px;text-align:center;top:123px">Layout</div>
<div class="a" style="left:122px;top:117px;width:58px;height:22px;background:#d6d6d6;border:1px solid #9a9a9a"></div>
<div class="t" style="left:122px;width:58px;text-align:center;top:123px">Sketch</div>
<div class="a" style="left:179px;top:117px;width:61px;height:22px;background:#d6d6d6;border:1px solid #9a9a9a"></div>
<div class="t" style="left:179px;width:61px;text-align:center;top:123px">Evaluate</div>
<div class="a" style="left:239px;top:117px;width:134px;height:22px;background:#d6d6d6;border:1px solid #9a9a9a"></div>
<div class="t" style="left:239px;width:134px;text-align:center;top:123px;letter-spacing:-0.45px">SOLIDWORKS Add-Ins</div>
<div class="a" style="left:372px;top:117px;width:118px;height:22px;background:#d6d6d6;border:1px solid #9a9a9a"></div>
<div class="t" style="left:372px;width:118px;text-align:center;top:123px;letter-spacing:-0.7px">SOLIDWORKS MBD</div>

<!-- ============ LEFT PANEL ============ -->
<div class="a" style="left:0;top:139px;width:230px;height:837px;background:#f7f7f7;border-right:1px solid #9c9c9c"></div>
<div class="a" style="left:0;top:139px;width:229px;height:1px;background:#9c9c9c"></div>
<div class="a" style="left:1px;top:140px;width:226px;height:5px;border:1px solid #c8c8c8;border-top:none;background:#fbfbfb"></div>
<div class="a" style="left:109px;top:148px;width:7px;height:7px;border-radius:50%;background:#ddd;border:1px solid #aaa"></div>
<div class="a" style="left:0;top:159px;width:227px;height:1px;background:#d0d0d0"></div>
<!-- panel tabs -->
<div class="a" style="left:2px;top:164px;width:40px;height:26px;border-top:1px solid #bbb;background:#f7f7f7"></div>
<div class="a" style="left:41px;top:164px;width:41px;height:26px;background:#d7d7d7;border:1px solid #a8a8a8"></div>
<div class="a" style="left:81px;top:164px;width:41px;height:26px;background:#d7d7d7;border:1px solid #a8a8a8"></div>
<div class="a" style="left:121px;top:164px;width:41px;height:26px;background:#d7d7d7;border:1px solid #a8a8a8"></div>
<div class="a" style="left:161px;top:164px;width:41px;height:26px;background:#d7d7d7;border:1px solid #a8a8a8"></div>
<div class="a" style="left:41px;top:189px;width:186px;height:1px;background:#a8a8a8"></div>
<svg class="a" style="left:0;top:164px" width="230" height="26" viewBox="0 164 230 26">
<path d="M14 176 L19 173 L23 175 L23 179 L31 175 L31 183 L23 187 L14 182 Z" fill="#f2c21c" stroke="#8a6a00" stroke-width="0.9"/>
<path d="M14 176 L23 180.5 L31 176.5 M23 180.5 V187" fill="none" stroke="#8a6a00" stroke-width="0.7"/>
<path d="M22 170 L27 168 L31 170 L31 177 L27 179 L22 177 Z" fill="#79b6e0" stroke="#14466b" stroke-width="0.8"/>
<path d="M22 170 L27 172 L31 170 M27 172 V179" fill="none" stroke="#14466b" stroke-width="0.6"/>
<rect x="53" y="169" width="17" height="16" rx="1" fill="#fff" stroke="#333" stroke-width="1.2"/><rect x="53" y="169" width="17" height="3" fill="#3b8ac4"/>
<g fill="#2b7bb5"><rect x="56" y="174" width="3" height="2"/><rect x="56" y="177.5" width="3" height="2"/><rect x="56" y="181" width="3" height="2"/></g><path d="M61 175 H67 M61 178.5 H67 M61 182 H67" stroke="#333"/>
<path d="M96 169 V186 M96 172 H101 M96 182 H101" stroke="#333" stroke-width="1.2" fill="none"/><rect x="101" y="168.5" width="6" height="6" fill="#fff" stroke="#333"/><rect x="101" y="178" width="6" height="6" fill="#fff" stroke="#333"/>
<circle cx="142" cy="177" r="6" fill="none" stroke="#111" stroke-width="1.8"/><path d="M142 168 V186 M133 177 H151" stroke="#111" stroke-width="1.6"/>
<circle cx="182" cy="176.5" r="8.5" fill="#2a9a3a"/><path d="M182 176.5 L182 168 A8.5 8.5 0 0 1 190.5 176.5 Z" fill="#d8201e"/><path d="M182 176.5 L173.5 176.5 A8.5 8.5 0 0 1 182 168 Z" fill="#2b6ed0"/><path d="M182 176.5 L190.5 176.5 A8.5 8.5 0 0 1 182 185 Z" fill="#f2c21c"/><ellipse cx="185" cy="174" rx="2" ry="4" fill="#222" transform="rotate(-30 185 174)"/>
<path d="M215 172 L220 177 L215 182" fill="none" stroke="#555" stroke-width="1.5"/>
</svg>
<!-- filter -->
<div class="a" style="left:5px;top:191px;width:219px;height:24px;border:1px solid #c9c9c9;background:#f7f7f7"></div>
<svg class="a" style="left:7px;top:194px" width="26" height="20" viewBox="0 0 26 20"><path d="M1 2 H17 L11 9 V17 L8 15 V9 Z" fill="#f4f4f4" stroke="#444" stroke-width="1"/><rect x="1" y="1" width="16" height="2.5" rx="1" fill="#3b8ac4"/><path d="M18 12 H23 L20.5 15 Z" fill="#333"/></svg>


<svg width="0" height="0" style="position:absolute">
<defs>
<symbol id="i-books" viewBox="0 0 16 17"><path d="M8.2 2.1 L10.8 -0.1 L14.2 0.9 L14.2 12.4 L11.6 14.6 L8.2 13.6 Z" fill="#f2f2f2" stroke="#333" stroke-width="0.85"/><path d="M8.2 2.1 L11.6 3.1 L14.2 0.9 M11.6 3.1 V14.6" fill="none" stroke="#333" stroke-width="0.7"/><path d="M11.8 3.3 L14.0 1.3 V12.1 L11.8 14.1 Z" fill="#c8c8c8"/><path d="M4.6 3.3 L7.2 1.1 L10.6 2.1 L10.6 13.6 L8.0 15.8 L4.6 14.8 Z" fill="#f2f2f2" stroke="#333" stroke-width="0.85"/><path d="M4.6 3.3 L8.0 4.3 L10.6 2.1 M8.0 4.3 V15.8" fill="none" stroke="#333" stroke-width="0.7"/><path d="M8.2 4.5 L10.4 2.5 V13.3 L8.2 15.3 Z" fill="#c8c8c8"/><path d="M1.0 4.5 L3.6 2.3 L7.0 3.3 L7.0 14.8 L4.4 17.0 L1.0 16.0 Z" fill="#f2f2f2" stroke="#333" stroke-width="0.85"/><path d="M1.0 4.5 L4.4 5.5 L7.0 3.3 M4.4 5.5 V17.0" fill="none" stroke="#333" stroke-width="0.7"/><path d="M4.6 5.7 L6.8 3.7 V14.5 L4.6 16.5 Z" fill="#c8c8c8"/></symbol>
<symbol id="i-hist" viewBox="0 0 18 17"><path d="M0.5 3 L0.5 16.5 L17.5 16.5 L17.5 3.5 L8 3.5 L6.5 1 L1 1 Z" fill="#e4e4e4" stroke="#444" stroke-width="1"/><rect x="1.5" y="5" width="15" height="10.5" fill="#f4f4f4"/><circle cx="10" cy="10.5" r="4" fill="#fff" stroke="#333" stroke-width="1"/><path d="M10 8 V10.5 L12 11.5" stroke="#333" fill="none"/><path d="M5 11 C 5 8 7 6.5 9 6.5" stroke="#2b7bb5" stroke-width="1.6" fill="none"/><path d="M3 10 L5.5 13 L7.5 10 Z" fill="#2b7bb5"/></symbol>
<symbol id="i-sens" viewBox="0 0 18 17"><path d="M0.5 3 L0.5 16.5 L17.5 16.5 L17.5 3.5 L8 3.5 L6.5 1 L1 1 Z" fill="#e4e4e4" stroke="#444" stroke-width="1"/><rect x="1.5" y="5" width="15" height="10.5" fill="#f4f4f4"/><circle cx="9" cy="10.5" r="4.5" fill="#fff" stroke="#333" stroke-width="1.2"/><path d="M9 10.5 L12 7.5" stroke="#333" stroke-width="1.2"/><path d="M9 10.5 L13.5 10.5 A4.5 4.5 0 0 1 11 14.5 Z" fill="#d8201e"/></symbol>
<symbol id="i-ann" viewBox="0 0 18 17"><path d="M0.5 3 L0.5 16.5 L17.5 16.5 L17.5 3.5 L8 3.5 L6.5 1 L1 1 Z" fill="#e4e4e4" stroke="#444" stroke-width="1"/><rect x="1.5" y="5" width="15" height="10.5" fill="#f4f4f4"/><text x="9" y="15" font-family="Liberation Serif" font-weight="bold" font-size="11" fill="#2b7bb5" text-anchor="middle">A</text></symbol>
<symbol id="i-plane" viewBox="0 0 18 17"><path d="M3 3 L14 0.5 L14 14 L3 16.5 Z" fill="#fafafa" stroke="#444" stroke-width="0.9"/><path d="M8.5 0 V17" stroke="#444" stroke-dasharray="2 1.3"/></symbol>
<symbol id="i-orig" viewBox="0 0 18 17"><path d="M3 2.5 V15.5 H15" fill="none" stroke="#111" stroke-width="1.6"/><path d="M1 4 L3 0.5 L5 4 Z M13.5 13.5 L17 15.5 L13.5 17.5 Z" fill="#111"/></symbol>
<symbol id="i-part" viewBox="0 0 18 17"><path d="M1 6 L6 3 L9 4.5 L9 2.5 L13 1 L17 3 L17 11 L9 16 L1 12 Z" fill="#f2c21c" stroke="#7a5a00" stroke-width="0.9"/><path d="M9 4.5 L9 9 L17 5 M1 6 L9 10 L9 16" fill="none" stroke="#7a5a00" stroke-width="0.8"/></symbol>
<symbol id="i-mat" viewBox="0 0 18 17"><circle cx="3" cy="3" r="2" fill="#fff" stroke="#555" stroke-width="0.8"/><circle cx="3" cy="8.5" r="2" fill="#3b8ac4"/><circle cx="3" cy="14" r="2" fill="#f2c21c"/><path d="M6 3 H16 M6 8.5 H16 M6 14 H11" stroke="#333" stroke-width="1.4"/><circle cx="14" cy="14" r="3" fill="#333"/><circle cx="14" cy="14" r="1" fill="#fff"/></symbol>
<symbol id="i-ext" viewBox="0 0 18 17"><path d="M7 2.5 L10.5 0.5 L17.5 3 L17.5 14.5 L14 16.5 L7 14 Z" fill="#fafafa" stroke="#333" stroke-width="0.9"/><path d="M14 5 L17.5 3 L17.5 14.5 L14 16.5 Z" fill="#d4d4d4"/><path d="M7 2.5 L14 5 L17.5 3 M14 5 V16.5" fill="none" stroke="#333" stroke-width="0.8"/><path d="M0.5 6.5 L5 4 L11.5 6 L11.5 12.5 L7 15 L0.5 13 Z" fill="#4a8cc0" stroke="#1a4a70" stroke-width="0.9"/><path d="M0.5 6.5 L5 4 L11.5 6 L7 8.5 Z" fill="#8cc4e8"/><path d="M7 8.5 L11.5 6 L11.5 12.5 L7 15 Z" fill="#3576a8"/><path d="M0.5 6.5 L7 8.5 L11.5 6 M7 8.5 V15" fill="none" stroke="#1a4a70" stroke-width="0.7"/></symbol>
<symbol id="i-cut" viewBox="0 0 18 17"><path d="M1 3.5 L12.5 1.5 L12.5 14 L1 16 Z" fill="#f8f8f8" stroke="#333" stroke-width="0.9"/><path d="M12.5 1.5 L16 3.5 L16 15.5 L12.5 14 Z" fill="#d8d8d8" stroke="#333" stroke-width="0.9"/><path d="M1 16 L4.5 17 L16 15.5" fill="none" stroke="#333" stroke-width="0.8"/><path d="M4 6.5 L10 5.5 L10 12 L4 13 Z" fill="#fff" stroke="#333" stroke-width="0.8"/><path d="M6.5 6 L10 5.5 L10 12 L5 12.8 L5 10 L6.5 9.8 Z" fill="#3b8ac4"/></symbol>
<symbol id="i-mir" viewBox="0 0 18 17"><path d="M0.5 1.5 H3.5 V6 H6 V1.5 H8.5 V15.5 H0.5 Z" fill="#f4f4f4" stroke="#333" stroke-width="0.9"/><rect x="4" y="10" width="4" height="5" fill="#3b8ac4"/><path d="M9.5 0 V17" stroke="#111" stroke-width="1.2"/><path d="M10.5 1.5 H13 V6 H15.5 V1.5 H18 V15.5 H10.5 Z" fill="#f4f4f4" stroke="#333" stroke-width="0.9"/><rect x="11" y="10" width="4" height="5" fill="#808080"/></symbol>
<symbol id="i-hole" viewBox="0 0 18 17"><path d="M0.5 6 L6 4 L14.5 6.5 L14.5 14 L9 17 L0.5 14.5 Z" fill="#f0f0f0" stroke="#333" stroke-width="0.9"/><path d="M9 8.5 L14.5 6.5 L14.5 14 L9 17 Z" fill="#d8d8d8"/><path d="M0.5 6 L9 8.5 L14.5 6.5 M9 8.5 V17" fill="none" stroke="#333" stroke-width="0.7"/><ellipse cx="9.5" cy="11" rx="3.2" ry="3.4" fill="#3b8ac4" stroke="#14466b" stroke-width="0.7"/><path d="M9.5 3.5 L17 10" stroke="#111" stroke-width="2"/><path d="M8.5 2 L10.5 2.5 L10 4.5 Z" fill="#f0b020"/><g fill="#f0a020"><circle cx="3" cy="2" r="0.9"/><circle cx="6" cy="0.8" r="0.8"/><circle cx="14" cy="2" r="0.9"/><circle cx="17" cy="5" r="0.8"/></g></symbol>
<symbol id="i-fil" viewBox="0 0 18 17"><path d="M0.5 5.5 C 0.5 3.5 2 2.5 4 2.5 L11 1 C 14 1 17 3 17.5 6 L17.5 12 L9 16.5 L0.5 13.5 Z" fill="#f0f0f0" stroke="#333" stroke-width="0.9"/><path d="M4 2.5 L11 1 C 14 1 17 3 17.5 6 L10 9 C 8.5 6.5 6.5 4 4 2.5 Z" fill="#4a9ad0" stroke="#1a4a70" stroke-width="0.6"/><path d="M10 9 L17.5 6 L17.5 12 L9 16.5 Z" fill="#e0e0e0"/><path d="M0.5 5.5 C 4 5.5 8 6.5 10 9 V16.5 M10 9 L17.5 6" fill="none" stroke="#333" stroke-width="0.8"/></symbol>
<symbol id="i-mates" viewBox="0 0 18 17"><path d="M2 5 C 2 0 7 0 7 5 V13 C 7 16 3 16 3 13 V6 M10 6 C 10 1 16 1 16 6 V14 C 16 17 11 17 11 14 V7" fill="none" stroke="#2b7bb5" stroke-width="1.3"/></symbol>
</defs></svg>

<div class="a" style="left:0;top:217px;width:1px;height:755px;background:#cfcfcf"></div>
<!-- tree -->
<div class="a" style="left:0;top:217px;width:211px;height:726px;overflow:hidden">
<svg class="a" style="left:10px;top:5px" width="6" height="10"><path d="M0.5 0.5 L5 5 L0.5 9.5 Z" fill="#555"/></svg>
<svg class="a" style="left:27px;top:2px" width="18" height="17"><use href="#i-hist"/></svg>
<div class="t" style="left:50px;top:5px">History</div>
<svg class="a" style="left:27px;top:24px" width="18" height="17"><use href="#i-sens"/></svg>
<div class="t" style="left:50px;top:27px">Sensors</div>
<svg class="a" style="left:10px;top:49px" width="6" height="10"><path d="M0.5 0.5 L5 5 L0.5 9.5 Z" fill="#555"/></svg>
<svg class="a" style="left:27px;top:46px" width="18" height="17"><use href="#i-ann"/></svg>
<div class="t" style="left:50px;top:49px">Annotations</div>
<svg class="a" style="left:27px;top:68px" width="18" height="17"><use href="#i-plane"/></svg>
<div class="t" style="left:50px;top:71px">Front Plane</div>
<svg class="a" style="left:27px;top:90px" width="18" height="17"><use href="#i-plane"/></svg>
<div class="t" style="left:50px;top:93px">Top Plane</div>
<svg class="a" style="left:27px;top:112px" width="18" height="17"><use href="#i-plane"/></svg>
<div class="t" style="left:50px;top:115px">Right Plane</div>
<svg class="a" style="left:27px;top:134px" width="18" height="17"><use href="#i-orig"/></svg>
<div class="t" style="left:50px;top:137px">Origin</div>
<svg class="a" style="left:9px;top:161px" width="10" height="6"><path d="M0.5 0.5 L9 0.5 L4.75 5 Z" fill="#555"/></svg>
<svg class="a" style="left:27px;top:156px" width="18" height="17"><use href="#i-part"/></svg>
<div class="t" style="left:50px;top:159px">(f) Base1_&amp;&lt;1&gt; (Default&lt;&lt;Def</div>
<svg class="a" style="left:33px;top:181px" width="6" height="10"><path d="M0.5 0.5 L5 5 L0.5 9.5 Z" fill="#555"/></svg>
<svg class="a" style="left:50px;top:178px" width="18" height="17"><use href="#i-hist"/></svg>
<div class="t" style="left:73px;top:181px">History</div>
<svg class="a" style="left:50px;top:200px" width="18" height="17"><use href="#i-sens"/></svg>
<div class="t" style="left:73px;top:203px">Sensors</div>
<svg class="a" style="left:33px;top:225px" width="6" height="10"><path d="M0.5 0.5 L5 5 L0.5 9.5 Z" fill="#555"/></svg>
<svg class="a" style="left:50px;top:222px" width="18" height="17"><use href="#i-ann"/></svg>
<div class="t" style="left:73px;top:225px">Annotations</div>
<svg class="a" style="left:50px;top:244px" width="18" height="17"><use href="#i-mat"/></svg>
<div class="t" style="left:73px;top:247px">Material &lt;not specified&gt;</div>
<svg class="a" style="left:50px;top:266px" width="18" height="17"><use href="#i-plane"/></svg>
<div class="t" style="left:73px;top:269px">Front Plane</div>
<svg class="a" style="left:50px;top:288px" width="18" height="17"><use href="#i-plane"/></svg>
<div class="t" style="left:73px;top:291px">Top Plane</div>
<svg class="a" style="left:50px;top:310px" width="18" height="17"><use href="#i-plane"/></svg>
<div class="t" style="left:73px;top:313px">Right Plane</div>
<svg class="a" style="left:50px;top:332px" width="18" height="17"><use href="#i-orig"/></svg>
<div class="t" style="left:73px;top:335px">Origin</div>
<svg class="a" style="left:33px;top:357px" width="6" height="10"><path d="M0.5 0.5 L5 5 L0.5 9.5 Z" fill="#555"/></svg>
<svg class="a" style="left:50px;top:354px" width="18" height="17"><use href="#i-ext"/></svg>
<div class="t" style="left:73px;top:357px">Extrude1</div>
<svg class="a" style="left:33px;top:379px" width="6" height="10"><path d="M0.5 0.5 L5 5 L0.5 9.5 Z" fill="#555"/></svg>
<svg class="a" style="left:50px;top:376px" width="18" height="17"><use href="#i-ext"/></svg>
<div class="t" style="left:73px;top:379px">Extrude2</div>
<svg class="a" style="left:33px;top:401px" width="6" height="10"><path d="M0.5 0.5 L5 5 L0.5 9.5 Z" fill="#555"/></svg>
<svg class="a" style="left:50px;top:398px" width="18" height="17"><use href="#i-ext"/></svg>
<div class="t" style="left:73px;top:401px">Extrude3</div>
<svg class="a" style="left:33px;top:423px" width="6" height="10"><path d="M0.5 0.5 L5 5 L0.5 9.5 Z" fill="#555"/></svg>
<svg class="a" style="left:50px;top:420px" width="18" height="17"><use href="#i-cut"/></svg>
<div class="t" style="left:73px;top:423px">Cut-Extrude1</div>
<svg class="a" style="left:33px;top:445px" width="6" height="10"><path d="M0.5 0.5 L5 5 L0.5 9.5 Z" fill="#555"/></svg>
<svg class="a" style="left:50px;top:442px" width="18" height="17"><use href="#i-ext"/></svg>
<div class="t" style="left:73px;top:445px">Extrude4</div>
<svg class="a" style="left:33px;top:467px" width="6" height="10"><path d="M0.5 0.5 L5 5 L0.5 9.5 Z" fill="#555"/></svg>
<svg class="a" style="left:50px;top:464px" width="18" height="17"><use href="#i-ext"/></svg>
<div class="t" style="left:73px;top:467px">Extrude5</div>
<svg class="a" style="left:50px;top:486px" width="18" height="17"><use href="#i-mir"/></svg>
<div class="t" style="left:73px;top:489px">Mirror1</div>
<svg class="a" style="left:33px;top:511px" width="6" height="10"><path d="M0.5 0.5 L5 5 L0.5 9.5 Z" fill="#555"/></svg>
<svg class="a" style="left:50px;top:508px" width="18" height="17"><use href="#i-hole"/></svg>
<div class="t" style="left:73px;top:511px;letter-spacing:-0.2px">Ø8.0 (8) Diameter Hole1</div>
<svg class="a" style="left:33px;top:533px" width="6" height="10"><path d="M0.5 0.5 L5 5 L0.5 9.5 Z" fill="#555"/></svg>
<svg class="a" style="left:50px;top:530px" width="18" height="17"><use href="#i-hole"/></svg>
<div class="t" style="left:73px;top:533px;letter-spacing:-0.25px">Ø14.0 (14) Diameter Hole1</div>
<svg class="a" style="left:50px;top:552px" width="18" height="17"><use href="#i-fil"/></svg>
<div class="t" style="left:73px;top:555px">Fillet1</div>
<svg class="a" style="left:50px;top:574px" width="18" height="17"><use href="#i-fil"/></svg>
<div class="t" style="left:73px;top:577px">Fillet2</div>
<svg class="a" style="left:50px;top:596px" width="18" height="17"><use href="#i-fil"/></svg>
<div class="t" style="left:73px;top:599px">Fillet3</div>
<svg class="a" style="left:50px;top:618px" width="18" height="17"><use href="#i-fil"/></svg>
<div class="t" style="left:73px;top:621px">Fillet10</div>
<svg class="a" style="left:33px;top:643px" width="6" height="10"><path d="M0.5 0.5 L5 5 L0.5 9.5 Z" fill="#555"/></svg>
<svg class="a" style="left:50px;top:640px" width="18" height="17"><use href="#i-cut"/></svg>
<div class="t" style="left:73px;top:643px">Cut-Extrude2</div>
<svg class="a" style="left:32px;top:667px" width="10" height="6"><path d="M0.5 0.5 L9 0.5 L4.75 5 Z" fill="#555"/></svg>
<svg class="a" style="left:50px;top:662px" width="18" height="17"><use href="#i-cut"/></svg>
<div class="t" style="left:73px;top:665px">Cut-Extrude3</div>
<div class="a" style="left:70px;top:681px;width:77px;height:21px;background:#aecbe8;border:1px solid #6a9cc8"></div>
<svg class="a" style="left:73px;top:684px" width="18" height="17" viewBox="0 0 18 17"><path d="M14 1 H6 C 3 1 1 3 1 6 V16 H14" fill="none" stroke="#222" stroke-width="1.2"/></svg>
<div class="t" style="left:96px;top:687px">Sketch13</div>
<svg class="a" style="left:27px;top:706px" width="18" height="17"><use href="#i-mates"/></svg>
<div class="t" style="left:50px;top:709px">Mates</div>
</div>
<div class="a" style="left:0;top:942px;width:211px;height:4px;background:#2f86cc"></div>
<div class="a" style="left:212px;top:255px;width:15px;height:682px;background:#c9c9c9"></div>
<svg class="a" style="left:213px;top:220px" width="14" height="10"><path d="M2 7 L7 2 L12 7" fill="none" stroke="#555" stroke-width="1.5"/></svg>
<svg class="a" style="left:213px;top:941px" width="14" height="10"><path d="M2 3 L7 8 L12 3" fill="none" stroke="#555" stroke-width="1.5"/></svg>
<div class="a" style="left:18px;top:955px;width:110px;height:15px;background:#c9c9c9"></div>
<svg class="a" style="left:4px;top:956px" width="10" height="12"><path d="M7 2 L3 6 L7 10" fill="none" stroke="#555" stroke-width="1.5"/></svg>
<svg class="a" style="left:199px;top:956px" width="10" height="12"><path d="M3 2 L7 6 L3 10" fill="none" stroke="#555" stroke-width="1.5"/></svg>
<svg class="a" style="left:0;top:540px" width="230" height="400" viewBox="0 540 230 400">
<g fill="none" stroke-width="2">
<path d="M118 557 H192 C 203 557 211 561 211 568 V902" stroke="#1a7bc0"/>
<path d="M130 601 H192 C 203 601 211 605 211 610" stroke="#1a7bc0"/>
<path d="M155 887 H192 C 203 887 211 893 211 900" stroke="#6a4aa0"/>
<path d="M148 909 H203" stroke="#555" stroke-width="1.3" stroke-dasharray="3.5 3"/>
</g>
<path d="M111 557 L119 553.5 L119 560.5 Z M123 601 L131 597.5 L131 604.5 Z" fill="#1a7bc0"/>
<path d="M147 887 L155 883.5 L155 890.5 Z" fill="#6a4aa0"/>
<circle cx="210.5" cy="909" r="7" fill="#f0f0f0" stroke="#333" stroke-width="1.2"/>
</svg>

<!-- ============ RIGHT PANEL ============ -->
<div class="a" style="left:1468px;top:117px;width:211px;height:874px;background:#f7f7f7;border-left:1px solid #8a8a8a"></div>
<div class="a" style="left:1469px;top:118px;width:210px;height:21px;background:#a9a9a9;border-bottom:2px solid #333"></div>
<svg class="a" style="left:1476px;top:121px" width="16" height="14"><path d="M7 2 L2 7 L7 12 M12 2 L7 7 L12 12" fill="none" stroke="#111" stroke-width="2"/></svg>
<div class="t" style="left:1469px;width:210px;text-align:center;top:121px;font-weight:bold;color:#111">Design Library</div>
<svg class="a" style="left:1659px;top:120px" width="16" height="16" viewBox="0 0 16 16"><path d="M9 1 L15 7 L12.5 8 L9.5 11 L9.5 14 L2 6.5 L5 6.5 L8 3.5 Z" fill="#222"/><path d="M6 10 L1 15" stroke="#222" stroke-width="2"/></svg>
<!-- DL toolbar -->
<svg class="a" style="left:1470px;top:144px" width="209" height="26" viewBox="1470 144 209 26">
<circle cx="1487" cy="156" r="7.5" fill="#f4f4f4" stroke="#ccc"/><path d="M1483 156 H1492 M1486 153 L1483 156 L1486 159" stroke="#ccc" stroke-width="2" fill="none"/>
<circle cx="1514" cy="156" r="7.5" fill="#f4f4f4" stroke="#ccc"/><path d="M1509 156 H1518 M1515 153 L1518 156 L1515 159" stroke="#ccc" stroke-width="2" fill="none"/>
<path d="M1532 154 L1540 154 L1536 158 Z" fill="#555"/>
<use href="#i-books" x="1547" y="147" width="16" height="17"/>
<path d="M1563 156 V164 M1559 160 H1567" stroke="#1e9a2e" stroke-width="2.5"/>
<use href="#i-books" x="1577" y="148" width="16" height="17"/>
<path d="M1578 145 L1578 151 M1575 148 H1581 M1576 146 L1580 150 M1580 146 L1576 150" stroke="#f0a020" stroke-width="1"/>
<path d="M1604 152 L1609 152 L1610 154 L1617 154 L1617 165 L1604 165 Z" fill="#ddd" stroke="#444" stroke-width="0.9"/><path d="M1604 165 L1607 158 L1619 158 L1616 165 Z" fill="#f4f4f4" stroke="#444" stroke-width="0.9"/>
<path d="M1604 146 L1604 152 M1601 149 H1607 M1602 147 L1606 151 M1606 147 L1602 151" stroke="#f0a020" stroke-width="1"/>
<path d="M1631 154 C 1632 149 1640 147 1644 151" fill="none" stroke="#2b7bb5" stroke-width="3"/><path d="M1645 147 L1646 153 L1640 152 Z" fill="#2b7bb5"/>
<path d="M1645 159 C 1644 164 1636 166 1632 162" fill="none" stroke="#2b7bb5" stroke-width="3"/><path d="M1631 166 L1630 160 L1636 161 Z" fill="#2b7bb5"/>
<path d="M1665 148 L1660 154 H1663 V164 H1667 V154 H1670 Z" fill="#ddd"/>
</svg>
<div class="a" style="left:1472px;top:173px;width:207px;height:1px;background:#b8b8b8"></div>
<!-- DL tree -->
<div class="a" style="left:1496px;top:181px;width:106px;height:21px;background:#dfe3ee"></div>
<svg class="a" style="left:1480px;top:180px" width="200" height="90" viewBox="1480 180 200 90">
<g fill="none" stroke="#777" stroke-width="1.3"><path d="M1482 187 L1486 191.5 L1482 196"/><path d="M1482 209 L1486 213.5 L1482 218"/><path d="M1482 231 L1486 235.5 L1482 240"/><path d="M1482 253 L1486 257.5 L1482 262"/></g>
<use href="#i-books" x="1500" y="182" width="16" height="17"/>
<path d="M1503 206 H1513 L1514 211 L1510 212 V220 H1506 V212 L1502 211 Z" fill="#bbb" stroke="#444" stroke-width="0.9"/><path d="M1506 214 H1510 M1506 216.5 H1510" stroke="#444" stroke-width="0.7"/>
<circle cx="1508" cy="235.5" r="7.5" fill="#e8eaee" stroke="#666" stroke-width="0.9"/><path d="M1502 231 C 1504 229 1507 229 1508 231 C 1507 233 1505 233 1505 235 C 1503 236 1502 234 1501.5 233 Z M1510 229 C 1513 230 1515 232 1515 235 C 1513 236 1512 234 1511 236 C 1510 238 1508 237 1509 234 C 1510 232 1509 231 1510 229 Z M1504 239 C 1506 238 1508 240 1507 242 C 1505 242 1503 241 1504 239 Z" fill="#3b8ac4"/><path d="M1503 240 A7.5 7.5 0 0 0 1514 239" fill="none" stroke="#aaa" stroke-width="1.5"/>
<path d="M1500 252 L1508 249 L1516 252 L1516 263 L1508 266 L1500 263 Z" fill="#c8201e" stroke="#701010" stroke-width="0.8"/><path d="M1500 252 L1508 255 L1516 252 M1508 255 V266" fill="none" stroke="#fbb" stroke-width="0.5"/>
<text x="1503.5" y="262" font-family="Liberation Sans" font-weight="bold" font-size="7" fill="#fff">S</text><text x="1508.5" y="262" font-family="Liberation Sans" font-weight="bold" font-size="7" fill="#fff">W</text>
</svg>
<div class="t" style="left:1523px;top:186px">Design Library</div>
<div class="t" style="left:1523px;top:208px">Toolbox</div>
<div class="t" style="left:1523px;top:230px">3D ContentCentral</div>
<div class="t" style="left:1523px;top:252px;letter-spacing:-0.5px">SOLIDWORKS Content</div>
<!-- splitter -->
<div class="a" style="left:1473px;top:537px;width:206px;height:4px;background:#b4b8c4;border-top:1px solid #888;border-bottom:1px solid #999"></div>
<svg class="a" style="left:1493.5px;top:556px" width="30" height="28" viewBox="0 0 30 28"><path d="M1.5 4 L1.5 26.5 L28.5 26.5 L28.5 5.5 L13 5.5 L11.5 2 L2.5 2 Z" fill="#e8e8e8" stroke="#444" stroke-width="1"/><path d="M2.5 25.5 L27.5 8 L27.5 25.5 Z" fill="#d6d6d6"/><path d="M2.5 25.5 L27.5 12 L27.5 16 L8 25.5 Z" fill="#f4f4f4" opacity="0.8"/></svg><div class="t" style="left:1458.5px;width:100px;text-align:center;top:590px">annotations</div><svg class="a" style="left:1568.5px;top:556px" width="30" height="28" viewBox="0 0 30 28"><path d="M1.5 4 L1.5 26.5 L28.5 26.5 L28.5 5.5 L13 5.5 L11.5 2 L2.5 2 Z" fill="#e8e8e8" stroke="#444" stroke-width="1"/><path d="M2.5 25.5 L27.5 8 L27.5 25.5 Z" fill="#d6d6d6"/><path d="M2.5 25.5 L27.5 12 L27.5 16 L8 25.5 Z" fill="#f4f4f4" opacity="0.8"/></svg><div class="t" style="left:1533.5px;width:100px;text-align:center;top:590px">assemblies</div><svg class="a" style="left:1493.5px;top:631px" width="30" height="28" viewBox="0 0 30 28"><path d="M1.5 4 L1.5 26.5 L28.5 26.5 L28.5 5.5 L13 5.5 L11.5 2 L2.5 2 Z" fill="#e8e8e8" stroke="#444" stroke-width="1"/><path d="M2.5 25.5 L27.5 8 L27.5 25.5 Z" fill="#d6d6d6"/><path d="M2.5 25.5 L27.5 12 L27.5 16 L8 25.5 Z" fill="#f4f4f4" opacity="0.8"/></svg><div class="t" style="left:1458.5px;width:100px;text-align:center;top:665px">features</div><svg class="a" style="left:1568.5px;top:631px" width="30" height="28" viewBox="0 0 30 28"><path d="M1.5 4 L1.5 26.5 L28.5 26.5 L28.5 5.5 L13 5.5 L11.5 2 L2.5 2 Z" fill="#e8e8e8" stroke="#444" stroke-width="1"/><path d="M2.5 25.5 L27.5 8 L27.5 25.5 Z" fill="#d6d6d6"/><path d="M2.5 25.5 L27.5 12 L27.5 16 L8 25.5 Z" fill="#f4f4f4" opacity="0.8"/></svg><div class="t" style="left:1533.5px;width:100px;text-align:center;top:665px">forming</div><div class="t" style="left:1533.5px;width:100px;text-align:center;top:680px">tools</div><svg class="a" style="left:1493.5px;top:706px" width="30" height="28" viewBox="0 0 30 28"><path d="M1.5 4 L1.5 26.5 L28.5 26.5 L28.5 5.5 L13 5.5 L11.5 2 L2.5 2 Z" fill="#e8e8e8" stroke="#444" stroke-width="1"/><path d="M2.5 25.5 L27.5 8 L27.5 25.5 Z" fill="#d6d6d6"/><path d="M2.5 25.5 L27.5 12 L27.5 16 L8 25.5 Z" fill="#f4f4f4" opacity="0.8"/></svg><div class="t" style="left:1458.5px;width:100px;text-align:center;top:740px">motion</div><svg class="a" style="left:1568.5px;top:706px" width="30" height="28" viewBox="0 0 30 28"><path d="M1.5 4 L1.5 26.5 L28.5 26.5 L28.5 5.5 L13 5.5 L11.5 2 L2.5 2 Z" fill="#e8e8e8" stroke="#444" stroke-width="1"/><path d="M2.5 25.5 L27.5 8 L27.5 25.5 Z" fill="#d6d6d6"/><path d="M2.5 25.5 L27.5 12 L27.5 16 L8 25.5 Z" fill="#f4f4f4" opacity="0.8"/></svg><div class="t" style="left:1533.5px;width:100px;text-align:center;top:740px">parts</div><svg class="a" style="left:1493.5px;top:781px" width="30" height="28" viewBox="0 0 30 28"><path d="M1.5 4 L1.5 26.5 L28.5 26.5 L28.5 5.5 L13 5.5 L11.5 2 L2.5 2 Z" fill="#e8e8e8" stroke="#444" stroke-width="1"/><path d="M2.5 25.5 L27.5 8 L27.5 25.5 Z" fill="#d6d6d6"/><path d="M2.5 25.5 L27.5 12 L27.5 16 L8 25.5 Z" fill="#f4f4f4" opacity="0.8"/></svg><div class="t" style="left:1458.5px;width:100px;text-align:center;top:815px">routing</div><svg class="a" style="left:1568.5px;top:781px" width="30" height="28" viewBox="0 0 30 28"><path d="M1.5 4 L1.5 26.5 L28.5 26.5 L28.5 5.5 L13 5.5 L11.5 2 L2.5 2 Z" fill="#e8e8e8" stroke="#444" stroke-width="1"/><path d="M2.5 25.5 L27.5 8 L27.5 25.5 Z" fill="#d6d6d6"/><path d="M2.5 25.5 L27.5 12 L27.5 16 L8 25.5 Z" fill="#f4f4f4" opacity="0.8"/></svg><div class="t" style="left:1533.5px;width:100px;text-align:center;top:815px">smart</div><div class="t" style="left:1533.5px;width:100px;text-align:center;top:830px">components</div>

<!-- ============ TASK PANE TABS ============ -->
<div class="a" style="left:1442px;top:168px;width:27px;height:168px;background:#d4d4d4;border:1px solid #9a9a9a"></div>
<div class="a" style="left:1443px;top:192px;width:26px;height:23px;background:#fff;border-top:1px solid #9a9a9a;border-bottom:1px solid #9a9a9a"></div>
<svg class="a" style="left:1442px;top:168px" width="27" height="168" viewBox="1442 168 27 168">
<g stroke="#9a9a9a" stroke-width="1"><path d="M1442 240.5 H1468 M1442 264.5 H1468 M1442 288.5 H1468 M1442 312.5 H1468"/></g>
<path d="M1446 181 L1455 173 L1464 181" fill="none" stroke="#1d5b86" stroke-width="2"/><path d="M1448 180 V189 H1462 V180" fill="#fff" stroke="#333"/><rect x="1453" y="183" width="4" height="6" fill="none" stroke="#333"/>
<use href="#i-books" x="1447" y="195" width="16" height="17"/>
<path d="M1447 222 L1452 222 L1453 224 L1462 224 L1462 236 L1447 236 Z" fill="#ddd" stroke="#444" stroke-width="0.9"/><path d="M1447 236 L1450 228 L1465 228 L1462 236 Z" fill="#f4f4f4" stroke="#444" stroke-width="0.9"/>
<rect x="1447" y="244" width="17" height="16" fill="#fff" stroke="#333"/><path d="M1449 247 H1458 V250 H1455 V254 H1458 V257 H1449 V254 H1452 V250 H1449 Z" fill="#f2c21c" stroke="#8a6a00" stroke-width="0.6"/><rect x="1460" y="250" width="3" height="8" fill="#bbb"/>
<circle cx="1455.5" cy="276.5" r="7.5" fill="#2a9a3a"/><path d="M1455.5 276.5 L1448 276.5 A7.5 7.5 0 0 1 1455.5 269 Z" fill="#2b6ed0"/><path d="M1455.5 276.5 L1455.5 269 A7.5 7.5 0 0 1 1463 276.5 Z" fill="#d8201e"/><path d="M1455.5 276.5 L1463 276.5 A7.5 7.5 0 0 1 1455.5 284 Z" fill="#f2c21c"/>
<rect x="1447" y="292" width="17" height="16" fill="#fff" stroke="#333"/><rect x="1447" y="292" width="17" height="3" fill="#3b8ac4"/><g fill="#2b7bb5"><rect x="1449.5" y="297" width="3" height="2"/><rect x="1449.5" y="300.5" width="3" height="2"/><rect x="1449.5" y="304" width="3" height="2"/></g><path d="M1454 298 H1462 M1454 301.5 H1462 M1454 305 H1462" stroke="#333"/>
<circle cx="1455.5" cy="324.5" r="7.5" fill="#4a9ae0" stroke="#2a6aa0" stroke-width="0.8"/><path d="M1449.5 323 C 1450.5 318 1457 316 1461 319.5" fill="none" stroke="#fff" stroke-width="2.2"/><path d="M1462.5 316.5 L1462.5 322 L1457.5 321 Z" fill="#fff"/><path d="M1461.5 326 C 1460.5 331 1454 333 1450 329.5" fill="none" stroke="#fff" stroke-width="2.2"/><path d="M1448.5 332.5 L1448.5 327 L1453.5 328 Z" fill="#fff"/>
</svg>

<!-- ============ HEADS-UP TOOLBAR ============ -->
<svg class="a" style="left:640px;top:120px" width="420" height="26" viewBox="640 120 420 26">
<path d="M646 139 L654 135 L662 139 L654 143 Z" fill="#9acbe6" stroke="#2b6a9a" stroke-width="0.8"/><path d="M654 139 V125" stroke="#333" stroke-width="1.5"/><path d="M651 128 L654 124 L657 128 Z" fill="#333"/>
<path d="M673 127 L680 124 L687 127 L687 136 L680 139 L673 136 Z" fill="#9acbe6" stroke="#2b6a9a" stroke-width="0.9"/><path d="M673 127 L680 130 L687 127 M680 130 V139" fill="none" stroke="#2b6a9a" stroke-width="0.8"/>
<circle cx="708" cy="130" r="5.5" fill="#fff" stroke="#555" stroke-width="1.3"/><path d="M704 134 L698 140" stroke="#2b7bb5" stroke-width="2.5"/><path d="M708 127 V133 M705 130 H711" stroke="#333" stroke-width="0.8"/>
<circle cx="734" cy="130" r="5.5" fill="#fff" stroke="#555" stroke-width="1.3"/><path d="M730 134 L724 140" stroke="#2b7bb5" stroke-width="2.5"/><rect x="729" y="123.5" width="12" height="11" fill="none" stroke="#444" stroke-dasharray="2 1.5"/>
<path d="M750 136 L764 126 L768 130 L754 140 Z" fill="#e4e4e4" stroke="#555" stroke-width="0.9"/><path d="M758 137 H766 M761 134 L758 137 L761 140" stroke="#2b7bb5" stroke-width="1.8" fill="none"/>
<path d="M776 128 C 780 124 788 124 791 127 L791 139 C 788 136 780 136 776 140 Z" fill="#9acbe6" stroke="#2b6a9a" stroke-width="0.9"/><path d="M780 127 V138 M784 126 V137" stroke="#2b6a9a" stroke-dasharray="1.5 1"/>
<path d="M802 136 L814 126 L818 130 L806 140 Z" fill="#e4e4e4" stroke="#555" stroke-width="0.9"/><path d="M805 128 L812 122 L810 127 L815 126 L808 132 Z" fill="#f0a020"/><text x="810" y="142" font-family="Liberation Serif" font-size="10" fill="#2b7bb5">A</text>
<path d="M829 127 L835 123 L845 123 L845 135 L839 140 L829 140 Z" fill="#9acbe6" stroke="#333" stroke-width="0.9"/><path d="M829 127 H839 V140 M839 127 L845 123" fill="none" stroke="#333" stroke-width="0.8"/>
<path d="M852 132 L858 132 L855 135 Z" fill="#888"/>
<path d="M870 126 L877 123 L884 126 L884 138 L877 141 L870 138 Z" fill="#9acbe6" stroke="#555" stroke-width="0.9"/><path d="M877 123 V141" stroke="#fff" stroke-width="2"/><path d="M877 126 L884 126 L884 138 L877 141 Z" fill="#eee"/>
<path d="M891 132 L897 132 L894 135 Z" fill="#888"/>
<ellipse cx="915" cy="133" rx="8" ry="5" fill="#e4e4e4" stroke="#888"/><circle cx="915" cy="133" r="3" fill="#555"/><path d="M915 124 V142" stroke="#555" stroke-width="1.2"/>
<path d="M932 132 L938 132 L935 135 Z" fill="#888"/>
<circle cx="954" cy="131" r="7.5" fill="#2a9a3a"/><path d="M954 131 L946.5 131 A7.5 7.5 0 0 1 954 123.5 Z" fill="#2b6ed0"/><path d="M954 131 L954 123.5 A7.5 7.5 0 0 1 961.5 131 Z" fill="#d8201e"/><path d="M957 142 L965 133 L967 135 L959 143 Z" fill="#f2c21c" stroke="#555" stroke-width="0.6"/>
<circle cx="980" cy="130" r="7.5" fill="#2a9a3a"/><path d="M980 130 L972.5 130 A7.5 7.5 0 0 1 980 122.5 Z" fill="#2b6ed0"/><path d="M980 130 L980 122.5 A7.5 7.5 0 0 1 987.5 130 Z" fill="#d8201e"/><path d="M980 130 L987.5 130 A7.5 7.5 0 0 1 980 137.5 Z" fill="#f2c21c"/><rect x="972" y="137" width="16" height="5" fill="#222"/><g fill="#fff"><rect x="974" y="138" width="2" height="2"/><rect x="978" y="140" width="2" height="2"/><rect x="982" y="138" width="2" height="2"/><rect x="986" y="140" width="2" height="2"/></g>
<path d="M997 132 L1003 132 L1000 135 Z" fill="#888"/>
<rect x="1014" y="125" width="16" height="11" fill="#e8e8e8" stroke="#444" stroke-width="1.2"/><path d="M1022 136 V140 M1017 140.5 H1027" stroke="#444" stroke-width="1.5"/>
<path d="M1038 132 L1044 132 L1041 135 Z" fill="#888"/>
</svg>
<!-- viewport window controls -->
<svg class="a" style="left:1334px;top:124px" width="122" height="18" viewBox="1334 124 122 18">
<rect x="1336.5" y="127.5" width="11" height="12" fill="none" stroke="#999"/><path d="M1339.5 127.5 V139.5" stroke="#999"/><path d="M1344 130 L1341 133.5 L1344 137 Z" fill="#777"/>
<rect x="1362.5" y="127.5" width="11" height="12" fill="none" stroke="#999"/><path d="M1370.5 127.5 V139.5" stroke="#999"/><path d="M1366 130 L1369 133.5 L1366 137 Z" fill="#777"/>
<rect x="1388" y="136" width="10" height="3" fill="#8a8f98"/>
<rect x="1416.5" y="127.5" width="8" height="6" fill="none" stroke="#888" stroke-width="1.2"/><rect x="1413.5" y="131.5" width="8" height="6" fill="#e4e7ef" stroke="#888" stroke-width="1.2"/>
<path d="M1441 128 L1451 138 M1451 128 L1441 138" stroke="#999" stroke-width="1.5"/>
</svg>
<!-- viewport splitter grip -->
<div class="a" style="left:229px;top:530px;width:9px;height:32px;background:#f7f7f7;border:1px solid #888;border-left:none"></div>
<div class="a" style="left:230px;top:543px;width:6px;height:6px;border-radius:50%;background:#ddd;border:1px solid #999"></div>

<!-- ============ BOTTOM TABS & STATUS ============ -->
<div class="a" style="left:0;top:975px;width:1466px;height:1px;background:#b0b0b0"></div>
<div class="a" style="left:0;top:976px;width:67px;height:15px;background:#c4c4c4;border:1px solid #999"></div>
<svg class="a" style="left:0;top:976px" width="67" height="15" viewBox="0 976 67 15"><g fill="#a8a8a8" stroke="#b8b8b8" stroke-width="0.6"><rect x="1" y="977" width="15" height="13"/><rect x="17" y="977" width="15" height="13"/><rect x="33" y="977" width="15" height="13"/><rect x="49" y="977" width="16" height="13"/></g>
<g fill="#888"><path d="M5 979 V988 M7 983.5 L12 979 V988 Z"/><path d="M27 979 L21 983.5 L27 988 Z"/><path d="M37 979 L43 983.5 L37 988 Z"/><path d="M54 979 L59 983.5 L54 988 Z M61 979 V988"/></g><path d="M5 979 V988 M61 979 V988" stroke="#888"/></svg>
<div class="a" style="left:67px;top:976px;width:57px;height:15px;background:#fafafa"></div>
<div class="t" style="left:67px;width:57px;text-align:center;top:976px;font-weight:bold">Model</div>
<div class="a" style="left:124px;top:976px;width:68px;height:15px;background:#d4d4d4;border:1px solid #9a9a9a"></div>
<div class="t" style="left:124px;width:68px;text-align:center;top:976px">3D Views</div>
<div class="a" style="left:191px;top:976px;width:109px;height:15px;background:#d4d4d4;border:1px solid #9a9a9a"></div>
<div class="t" style="left:191px;width:109px;text-align:center;top:976px">Motion Study 1</div>
<div class="a" style="left:299px;top:976px;width:1166px;height:15px;background:#fafafa;border:1px solid #a0a0a0;border-left:none;border-top:none"></div>
<div class="a" style="left:0;top:990px;width:1679px;height:1px;background:#a8a8a8"></div>
<div class="a" style="left:0;top:991px;width:1679px;height:19px;background:#f7f7f7"></div>
<div class="t" style="left:2px;top:996px">Base1_&lt;1&gt;</div>
<div class="t" style="left:1302px;top:996px">Fully Defined</div>
<div class="a" style="left:1377px;top:993px;width:1px;height:15px;background:#d0d0d0"></div>
<div class="a" style="left:1384px;top:993px;width:1px;height:15px;background:#d0d0d0"></div>
<div class="t" style="left:1389px;top:996px">Editing Assembly</div>
<div class="a" style="left:1486px;top:993px;width:1px;height:15px;background:#d0d0d0"></div>
<div class="a" style="left:1502px;top:993px;width:1px;height:15px;background:#d0d0d0"></div>
<div class="t" style="left:1534px;top:996px">MMGS</div>
<svg class="a" style="left:1587px;top:998px" width="8" height="5"><path d="M0 4.5 L4 0.5 L8 4.5 Z" fill="#222"/></svg>
<svg class="a" style="left:1656px;top:993px" width="20" height="16" viewBox="0 0 20 16"><path d="M2 6 L10 2 L18 6 L18 10 L10 14 L2 10 Z" fill="#eee" stroke="#444" stroke-width="1"/><path d="M2 6 L10 10 L18 6 M10 10 V14" fill="none" stroke="#444" stroke-width="0.8"/><circle cx="10" cy="6" r="2" fill="none" stroke="#444"/></svg>
<div class="a" style="left:0;top:1010px;width:1679px;height:3px;background:#111"></div>
<div class="a" style="left:441px;top:1010px;width:47px;height:3px;background:#3a3a3a"></div>

</body></html>
